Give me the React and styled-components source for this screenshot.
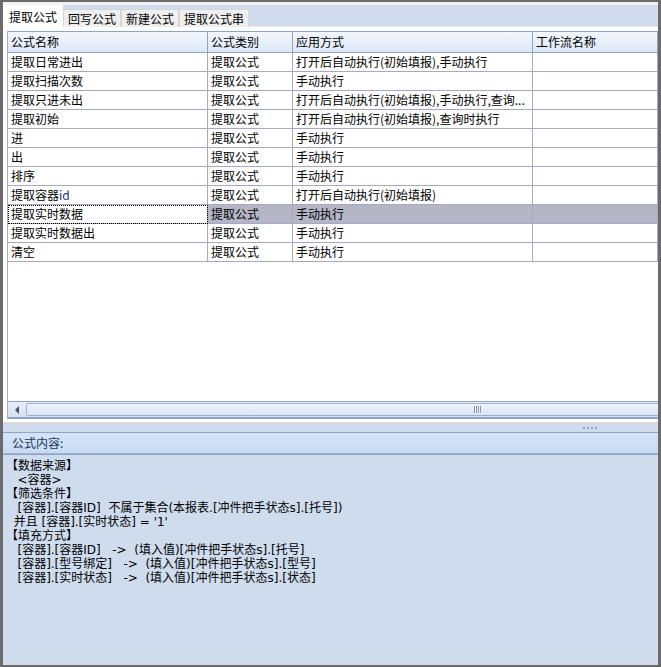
import React from "react";
import styled, { createGlobalStyle } from "styled-components";

const Global = createGlobalStyle`
  html, body { margin: 0; padding: 0; background: #6b6b6b; }
  * { box-sizing: border-box; }
`;

const FONT = `"Noto Sans CJK SC", "Noto Sans", sans-serif`;
const BODY_FONT = `"DejaVu Sans", "Noto Sans CJK SC", sans-serif`;

const Frame = styled.div`
  width: 661px;
  height: 667px;
  background: #6b6b6b;
  padding: 2px 3px 2px 3px;
  display: flex;
  flex-direction: column;
  font-family: ${FONT};
  font-size: 12px;
  color: #000;
`;

const TabStrip = styled.div`
  height: 25px;
  flex: none;
  background: linear-gradient(#f2f2f2 0 3px, #d0dcee 3px 24px, #e9edf2 24px);
  display: flex;
  align-items: flex-end;
`;

const Tab = styled.div`
  height: ${(p) => (p.$active ? "22px" : "18px")};
  padding: 0 ${(p) => (p.$active ? "5px" : "4px")};
  background: ${(p) => (p.$active ? "#ffffff" : "#efefef")};
  border: 1px solid ${(p) => (p.$active ? "#ffffff" : "#d6d6d6")};
  border-bottom: none;
  display: flex;
  align-items: center;
  line-height: 1;
  white-space: nowrap;
`;

const Panel = styled.div`
  flex: none;
  height: 395px;
  background: #ffffff;
  padding: 4px 0 3px 4px;
  display: flex;
  flex-direction: column;
`;

const GridBox = styled.div`
  flex: 1;
  display: flex;
  flex-direction: column;
  border-left: 1px solid #a4acc8;
  border-bottom: 1px solid #8ea5c5;
  min-height: 0;
  overflow: hidden;
`;

const Row = styled.div`
  display: grid;
  grid-template-columns: 200px 85px 240px 1fr;
  height: ${(p) => (p.$header ? "22px" : "19px")};
  flex: none;
  ${(p) =>
    p.$header &&
    `
    background: linear-gradient(#f3f7fd, #e6eef9 60%, #dce7f6);
    border-top: 1px solid #8ea5c5;
    border-bottom: 1px solid #8ea5c5;
  `}
`;

const Cell = styled.div`
  padding: 0 3px;
  display: flex;
  align-items: center;
  white-space: nowrap;
  overflow: hidden;
  line-height: 1;
  border-right: 1px solid ${(p) => (p.$header ? "#8ea5c5" : "#a8a8c6")};
  border-bottom: ${(p) => (p.$header ? "none" : "1px solid #a8a8c6")};
  background: ${(p) => (p.$sel ? "#b4b6c5" : "transparent")};
  ${(p) =>
    p.$focus &&
    `
    outline: 1px dotted #000;
    outline-offset: -1px;
  `}
`;

const IdText = styled.span`
  color: #1d2c86;
`;

const Filler = styled.div`
  flex: 1;
`;

const HScroll = styled.div`
  height: 17px;
  flex: none;
  display: flex;
  overflow: hidden;
  border-top: 1px solid #8ea5c5;
  border-bottom: 1px solid #8ea5c5;
  background: linear-gradient(#e6edf7, #d6e2f1);
`;

const ArrowBtn = styled.div`
  width: 18px;
  flex: none;
  display: flex;
  align-items: center;
  justify-content: center;
  &::before {
    content: "";
    border-top: 4px solid transparent;
    border-bottom: 4px solid transparent;
    border-right: 4px solid #3d4f6b;
  }
`;

const Thumb = styled.div`
  flex: none;
  width: 904px;
  margin: 1px 0;
  border: 1px solid #9bb0cf;
  border-radius: 2px;
  background: linear-gradient(#eef3fa, #dbe5f3);
  display: flex;
  align-items: center;
  justify-content: center;
`;

const Grip = styled.div`
  width: 8px;
  height: 7px;
  background: repeating-linear-gradient(90deg, #8298bb 0 1px, #eef3fa 1px 2px);
`;

const GrayLine = styled.div`
  height: 2px;
  flex: none;
  background: #dadada;
`;

const Splitter = styled.div`
  height: 9px;
  flex: none;
  background: #d0dcee;
  border-bottom: 1px solid #8ea5c5;
  display: flex;
  justify-content: flex-end;
  align-items: flex-start;
  padding: 3px 61px 0 0;
`;

const Dots = styled.div`
  width: 14px;
  height: 2px;
  background: repeating-linear-gradient(90deg, #8ea5c5 0 2px, transparent 2px 4px);
`;

const ContentHeader = styled.div`
  height: 21px;
  flex: none;
  background: linear-gradient(#d5e3f5, #cddff5 70%, #c6daf3);
  border-bottom: 1px solid #9fb3d1;
  padding-left: 9px;
  display: flex;
  align-items: center;
  color: #22375a;
  line-height: 1;
`;

const ContentBody = styled.div`
  flex: 1;
  background: #cfdcee;
  border-top: 1px solid #8ea5c5;
  padding: 4px 0 0 3px;
  white-space: pre;
  font-family: ${BODY_FONT};
  font-size: 12px;
  line-height: 14px;
  color: #000;
`;

const Line = styled.div`
  height: 14px;
`;

const rows = [
  ["提取日常进出", "提取公式", "打开后自动执行(初始填报),手动执行"],
  ["提取扫描次数", "提取公式", "手动执行"],
  ["提取只进未出", "提取公式", "打开后自动执行(初始填报),手动执行,查询..."],
  ["提取初始", "提取公式", "打开后自动执行(初始填报),查询时执行"],
  ["进", "提取公式", "手动执行"],
  ["出", "提取公式", "手动执行"],
  ["排序", "提取公式", "手动执行"],
  ["提取容器id", "提取公式", "打开后自动执行(初始填报)"],
  ["提取实时数据", "提取公式", "手动执行"],
  ["提取实时数据出", "提取公式", "手动执行"],
  ["清空", "提取公式", "手动执行"],
];

const lines = [
  "【数据来源】",
  "   <容器>",
  "【筛选条件】",
  "   [容器].[容器ID]  不属于集合(本报表.[冲件把手状态s].[托号])",
  "  并且 [容器].[实时状态] = '1'",
  "【填充方式】",
  "   [容器].[容器ID]   ->  (填入值)[冲件把手状态s].[托号]",
  "   [容器].[型号绑定]   ->  (填入值)[冲件把手状态s].[型号]",
  "   [容器].[实时状态]   ->  (填入值)[冲件把手状态s].[状态]",
];

function renderName(name) {
  if (name.endsWith("id")) {
    return (
      <>
        {name.slice(0, -2)}
        <IdText>id</IdText>
      </>
    );
  }
  return name;
}

export default function App() {
  return (
    <>
      <Global />
      <Frame>
        <TabStrip>
          <Tab $active>提取公式</Tab>
          <Tab>回写公式</Tab>
          <Tab>新建公式</Tab>
          <Tab>提取公式串</Tab>
        </TabStrip>
        <Panel>
          <GridBox>
            <Row $header>
              <Cell $header>公式名称</Cell>
              <Cell $header>公式类别</Cell>
              <Cell $header>应用方式</Cell>
              <Cell $header>工作流名称</Cell>
            </Row>
            {rows.map((r, i) => {
              const sel = i === 8;
              return (
                <Row key={i}>
                  <Cell $focus={sel}>{renderName(r[0])}</Cell>
                  <Cell $sel={sel}>{r[1]}</Cell>
                  <Cell $sel={sel}>{r[2]}</Cell>
                  <Cell $sel={sel}></Cell>
                </Row>
              );
            })}
            <Filler />
            <HScroll>
              <ArrowBtn />
              <Thumb>
                <Grip />
              </Thumb>
            </HScroll>
          </GridBox>
        </Panel>
        <GrayLine />
        <Splitter>
          <Dots />
        </Splitter>
        <ContentHeader>公式内容:</ContentHeader>
        <ContentBody>
          {lines.map((l, i) => (
            <Line key={i}>{l}</Line>
          ))}
        </ContentBody>
      </Frame>
    </>
  );
}
